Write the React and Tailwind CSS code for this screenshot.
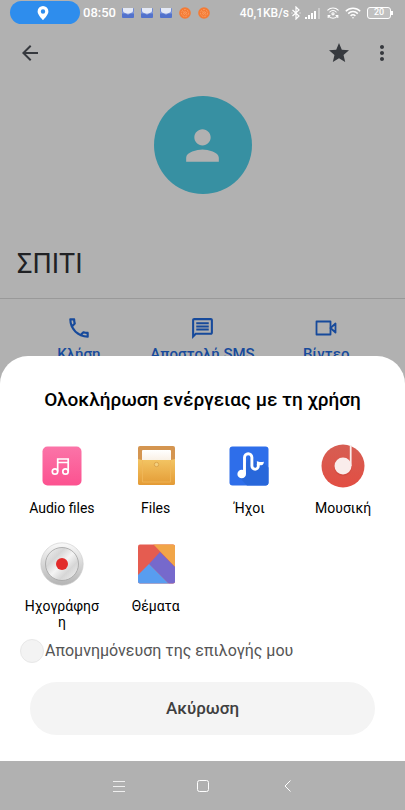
import { MdArrowBack, MdMoreVert, MdOutlineMessage, MdOutlinePhone, MdPerson, MdStar } from "react-icons/md"

function MailIcon(){
    return(
        <svg className="h-3 w-3" viewBox="0 0 12 12">
            <rect x="0" y="1" width="12" height="10" rx="1" fill="#5272cc"/>
            <path d="M0 4l6 4 6-4v2.500H0z" fill="#7f97dc"/>
            <path d="M.8 1h10.400v3C9.500 7.500 2.500 7.500.8 4z" fill="#e4e9f5"/>
        </svg>
    )
}

function CoinIcon(){
    return(
        <svg className="h-3 w-3" viewBox="0 0 12 12" fill="none">
            <circle cx="6" cy="6" r="5.8" fill="#f47b35"/>
            <circle cx="6" cy="6" r="3.5" stroke="#ffb07a" strokeWidth=".6" strokeDasharray="2 1"/>
            <path d="M4 4.5l4 3M5.5 4.2L8 5.8M4 6.3l2.3 1.6" stroke="#ffb07a" strokeWidth=".6"/>
        </svg>
    )
}

function BluetoothIcon(){
    return(
        <svg className="h-3.5 w-2.5" viewBox="0 0 10 14" fill="none" stroke="#fff" strokeWidth="1.2">
            <path d="M1.5 4l6.5 6-3 3V1l3 3-6.5 6"/>
            <path d="M.5 7h1M8.5 7h1"/>
        </svg>
    )
}

function SignalIcon(){
    return(
        <svg className="h-3 w-4" viewBox="0 0 16 12" fill="#fff">
            <rect x="0" y="10" width="2" height="2"/>
            <rect x="3" y="8" width="2" height="4"/>
            <rect x="6" y="6" width="2" height="6"/>
            <rect x="9" y="4" width="2" height="8"/>
            <rect x="13" y="1" width="2" height="11" opacity=".35"/>
        </svg>
    )
}

function HotspotIcon(){
    return(
        <svg className="h-3 w-3" viewBox="0 0 12 12" fill="none" stroke="#fff" strokeWidth="1.1" strokeLinecap="round">
            <path d="M.8 3.200C3.500.2 8.500.2 11.200 3.200M2.800 5c1.800-2 4.600-2 6.400 0M1.500 8.800c1.800 3.300 7.200 3.300 9 0"/>
            <circle cx="6" cy="6.800" r="1.100"/>
            <path d="M1.200 10.500V8.600h1.800M10.800 10.500V8.600H9"/>
        </svg>
    )
}

function WifiIcon(){
    return(
        <svg className="h-3 w-4" viewBox="0 0 16 12" fill="none" stroke="#fff" strokeWidth="1.500">
            <path d="M.8 4.200c4-4 10.400-4 14.400 0M3.200 6.600c2.700-2.700 6.900-2.700 9.600 0M5.600 8.900c1.400-1.400 3.400-1.400 4.800 0"/>
            <circle cx="8" cy="10.800" r=".8" fill="#fff" stroke="none"/>
        </svg>
    )
}

function VideoIcon(){
    return(
        <svg className="h-6 w-6" viewBox="0 0 24 24" fill="none" stroke="currentColor" strokeWidth="1.800" strokeLinejoin="round">
            <rect x="2.500" y="5.500" width="14" height="13"/>
            <path d="M16.500 12l5-4.500v9z"/>
        </svg>
    )
}

function AudioFilesIcon(){
    return(
        <svg className="h-11 w-11" viewBox="0 0 44 44" fill="none">
            <defs>
                <linearGradient id="pink" x1="0" y1="0" x2="0" y2="1">
                    <stop stopColor="#fb74a8"/>
                    <stop offset="1" stopColor="#fc5290"/>
                </linearGradient>
            </defs>
            <rect x="2.500" y="2.500" width="39" height="39" rx="5" fill="url(#pink)"/>
            <g stroke="#fff" strokeWidth="1.700">
                <circle cx="15" cy="27.500" r="2.700"/>
                <circle cx="25.500" cy="27.500" r="2.700"/>
                <path d="M17.700 27.500V15h10.500v12.500M17.700 18.500h10.500"/>
            </g>
        </svg>
    )
}

function FilesIcon(){
    return(
        <svg className="h-11 w-11" viewBox="0 0 44 44" fill="none">
            <defs>
                <linearGradient id="folder" x1="0" y1="0" x2="0" y2="1">
                    <stop stopColor="#f3c564"/>
                    <stop offset="1" stopColor="#e49b35"/>
                </linearGradient>
                <linearGradient id="paper" x1="0" y1="0" x2="0" y2="1">
                    <stop stopColor="#fff"/>
                    <stop offset="1" stopColor="#f8eee0"/>
                </linearGradient>
            </defs>
            <rect x="4" y="2" width="37" height="39" rx="2" fill="#d49550"/>
            <rect x="8" y="6" width="29" height="12" rx="1" fill="url(#paper)"/>
            <path d="M4 15l4 1h29l4-1v24a2 2 0 0 1-2 2H6a2 2 0 0 1-2-2z" fill="url(#folder)"/>
            <path d="M8.500 16v22h28V16" stroke="#f0b85b" strokeWidth=".8"/>
            <circle cx="22.500" cy="20.500" r="2.200" fill="#f3d080" stroke="#d59c43" strokeWidth=".8"/>
        </svg>
    )
}

function SoundsIcon(){
    return(
        <svg className="h-11 w-11" viewBox="0 0 44 44" fill="none">
            <rect x="2.500" y="2.500" width="39" height="39" rx="3" fill="#2e6eea"/>
            <path d="M24 10l4 8 8 0 5.500 5.500V38.500a3 3 0 0 1-3 3H20L12 33z" fill="#2867da"/>
            <circle cx="14.700" cy="30" r="4.300" fill="#fff"/>
            <path d="M17.500 30V13.500a3.700 3.700 0 0 1 7.400 0V22a3.200 3.200 0 0 0 6.400 0v-2" stroke="#fff" strokeWidth="2.900"/>
            <path d="M29.900 17c1.500 1 4 1.200 7 .8-.2 2-1 3.400-2.600 3.400h-4.400z" fill="#fff"/>
        </svg>
    )
}

function MusicIcon(){
    return(
        <svg className="h-11 w-11" viewBox="0 0 44 44" fill="none">
            <defs>
                <linearGradient id="red" x1="0" y1="0" x2="0" y2="1">
                    <stop stopColor="#d65e53"/>
                    <stop offset="1" stopColor="#e24e43"/>
                </linearGradient>
            </defs>
            <circle cx="22" cy="22" r="21.500" fill="url(#red)"/>
            <circle cx="22" cy="23" r="9" fill="#c74439" opacity=".5"/>
            <circle cx="22" cy="22" r="8.500" fill="#f9eceb"/>
            <path d="M29.700 1v21" stroke="#f9eceb" strokeWidth="1.800"/>
        </svg>
    )
}

function RecorderIcon(){
    return(
        <svg className="h-11 w-11" viewBox="0 0 44 44" fill="none">
            <defs>
                <linearGradient id="ring" x1="0" y1="0" x2="0" y2="1">
                    <stop stopColor="#fafafa"/>
                    <stop offset="1" stopColor="#b4b4b4"/>
                </linearGradient>
                <linearGradient id="steel" x1="0" y1="0" x2="1" y2="1">
                    <stop stopColor="#f4f4f4"/>
                    <stop offset=".3" stopColor="#d6d6d6"/>
                    <stop offset=".5" stopColor="#f4f4f4"/>
                    <stop offset=".7" stopColor="#d6d6d6"/>
                    <stop offset="1" stopColor="#f4f4f4"/>
                </linearGradient>
            </defs>
            <circle cx="22" cy="22" r="21.200" fill="url(#ring)" stroke="#c9c9c9" strokeWidth=".6"/>
            <circle cx="22" cy="22" r="16.500" fill="url(#steel)" stroke="#a2a2a2" strokeWidth=".8"/>
            <circle cx="22" cy="22" r="6" fill="#e22c2b"/>
        </svg>
    )
}

function ThemesIcon(){
    return(
        <svg className="h-11 w-11" viewBox="0 0 44 44">
            <clipPath id="tile"><rect x="4" y="2.500" width="37" height="39" rx="2"/></clipPath>
            <g clipPath="url(#tile)">
                <path d="M4 2h37v40H4z" fill="#e55c50"/>
                <path d="M19 2h22v23z" fill="#f1a548"/>
                <path d="M26 10l15 15v17H35L15 22z" fill="#7669cc"/>
                <path d="M4 33l11-11 20 20H4z" fill="#589df0"/>
            </g>
        </svg>
    )
}

const actions=[
    {label:"Κλήση",icon:<MdOutlinePhone size={26}/>},
    {label:"Αποστολή SMS",icon:<MdOutlineMessage size={25}/>},
    {label:"Βίντεο",icon:<VideoIcon/>},
]

const apps=[
    {label:"Audio files",icon:<AudioFilesIcon/>},
    {label:"Files",icon:<FilesIcon/>},
    {label:"Ήχοι",icon:<SoundsIcon/>},
    {label:"Μουσική",icon:<MusicIcon/>},
    {label:"Ηχογράφηση",icon:<RecorderIcon/>},
    {label:"Θέματα",icon:<ThemesIcon/>},
]

function StatusBar(){
    return(
        <div className="flex h-[25px] shrink-0 items-center justify-between pr-3 pl-[10px] text-[13px] font-medium text-white">
            <div className="flex items-center">
                <div className="flex h-[23px] w-[70px] items-center justify-center rounded-full bg-[#2e8ded]">
                    <svg className="mr-1 h-3.5 w-3" viewBox="0 0 12 14">
                        <path fillRule="evenodd" d="M6 0a5.400 5.400 0 0 0-5.400 5.400C.6 9 6 14 6 14s5.400-5 5.400-8.600A5.400 5.400 0 0 0 6 0zm0 3.300a2.200 2.200 0 1 1 0 4.400 2.200 2.200 0 0 1 0-4.400z" fill="#fff"/>
                    </svg>
                </div>
                <span className="ml-[3px]">08:50</span>
                <div className="ml-[6px] flex gap-[7px]">
                    <MailIcon/>
                    <MailIcon/>
                    <MailIcon/>
                    <CoinIcon/>
                    <CoinIcon/>
                </div>
            </div>
            <div className="flex items-center">
                <span className="mr-[2px] text-[12px]">40,1KB/s</span>
                <BluetoothIcon/>
                <div className="ml-1 flex items-center gap-[6px]">
                    <SignalIcon/>
                    <HotspotIcon/>
                    <WifiIcon/>
                </div>
                <div className="ml-[6px] flex h-3 w-6 items-center justify-center rounded-[3px] border border-white bg-white/20 text-[9px] leading-none">20</div>
                <div className="h-1 w-[2px] bg-white"></div>
            </div>
        </div>
    )
}

function Contact(){
    return(
        <main className="flex min-h-0 flex-1 flex-col overflow-hidden">
            <StatusBar/>
            <div className="flex h-14 shrink-0 items-center pr-[11px] pl-[18px] text-[#36393e]">
                <button aria-label="Πίσω"><MdArrowBack size={24}/></button>
                <button aria-label="Αγαπημένα" className="ml-auto"><MdStar size={24}/></button>
                <button aria-label="Περισσότερα" className="ml-[19px]"><MdMoreVert size={24}/></button>
            </div>
            <div className="mt-[15px] flex h-[98px] w-[98px] shrink-0 items-center justify-center self-center rounded-full bg-[#3790a2] text-[#b1b1b1]">
                <MdPerson size={49}/>
            </div>
            <h1 className="mt-[50px] shrink-0 border-b border-[#999] pb-[14px] pl-[17px] text-[27px] leading-10 text-[#202124]">ΣΠΙΤΙ</h1>
            <div className="mt-4 grid shrink-0 grid-cols-3 px-[17px] text-[#174a9b]">
                {actions.map(a=>(
                    <button key={a.label} className="flex flex-col items-center text-[15px] leading-5 font-medium whitespace-nowrap">
                        <span className="flex h-[26px] items-center">{a.icon}</span>
                        <span className="mt-[3px]">{a.label}</span>
                    </button>
                ))}
            </div>
        </main>
    )
}

function ChooserSheet(){
    return(
        <section className="shrink-0 rounded-t-[28px] bg-white pt-8 pb-[26px]">
            <h2 className="text-center text-[19px] leading-6 font-medium text-black">Ολοκλήρωση ενέργειας με τη χρήση</h2>
            <div className="mt-8 grid grid-cols-4 gap-y-[26px] px-[15px]">
                {apps.map(app=>(
                    <button key={app.label} className="flex flex-col items-center px-2 text-[14px] leading-4 text-black">
                        {app.icon}
                        <span className="mt-3 max-w-full break-words">{app.label}</span>
                    </button>
                ))}
            </div>
            <label className="mt-[9px] flex items-center pl-5 text-[16px] leading-6 text-[#555]">
                <input type="checkbox" className="mr-[1px] h-6 w-6 appearance-none rounded-full border border-[#e8e8e8] bg-[#f3f3f3] checked:bg-[#2e8ded]"/>
                Απομνημόνευση της επιλογής μου
            </label>
            <div className="mt-[19px] px-[30px]">
                <button className="h-[53px] w-full rounded-full bg-[#f4f4f4] text-[17px] font-medium text-[#3f3f3f]">Ακύρωση</button>
            </div>
        </section>
    )
}

function NavBar(){
    return(
        <nav className="flex h-[49px] shrink-0 items-center justify-center gap-[72px] text-white">
            <button aria-label="Πρόσφατα">
                <svg className="h-3 w-3 opacity-80" viewBox="0 0 12 12" stroke="currentColor">
                    <path d="M0 1.500h12M0 6.500h12M0 11.500h12"/>
                </svg>
            </button>
            <button aria-label="Αρχική">
                <svg className="h-3 w-3" viewBox="0 0 12 12" fill="none" stroke="currentColor">
                    <rect x=".5" y=".5" width="11" height="11" rx="2"/>
                </svg>
            </button>
            <button aria-label="Πίσω">
                <svg className="h-3 w-3" viewBox="0 0 12 12" fill="none" stroke="currentColor">
                    <path d="M9.500.5L4 6l5.500 5.500"/>
                </svg>
            </button>
        </nav>
    )
}

export default function App(){
    return(
        <div className="flex h-screen flex-col bg-[#b1b1b1] font-['Roboto','Noto_Sans',sans-serif]">
            <Contact/>
            <ChooserSheet/>
            <NavBar/>
        </div>
    )
}
